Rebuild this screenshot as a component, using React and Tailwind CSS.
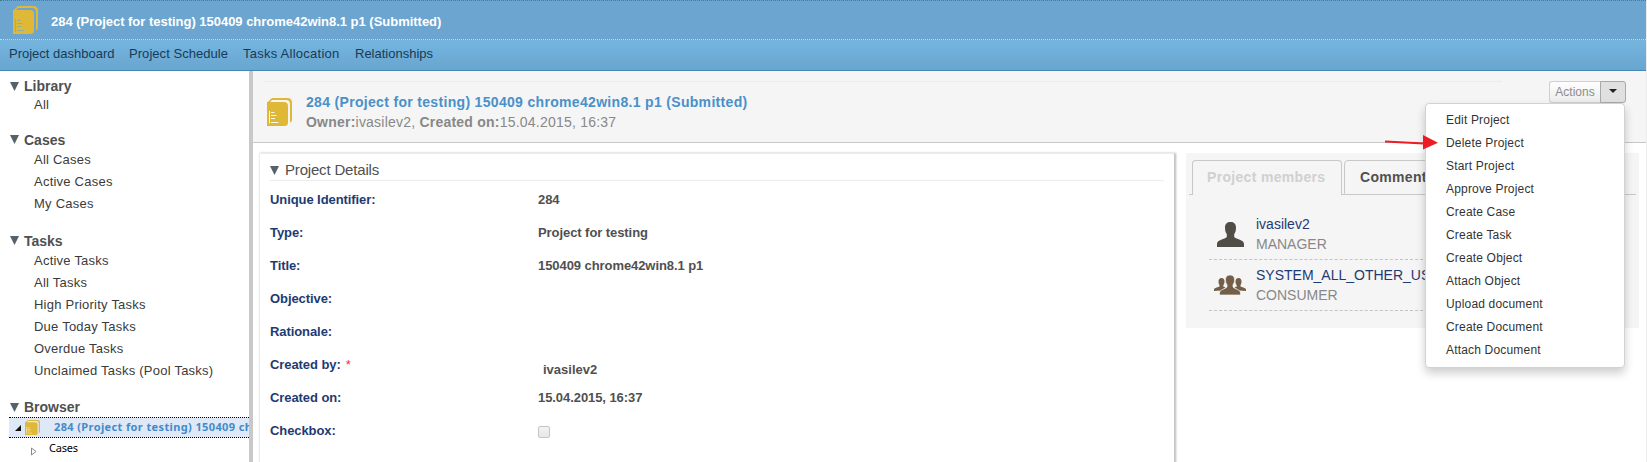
const NAV = [
  ['Project dashboard', 'w-[120px]', ''],
  ['Project Schedule', 'w-[114px]', 'tracking-[0.05px]'],
  ['Tasks Allocation', 'w-[112px] ', 'tracking-[0.25px]'],
  ['Relationships', '', ''],
];

const SECTIONS = [
  { title: 'Library', items: ['All'], box: 'h-[52px]', head: 'h-[16px]' },
  { title: 'Cases', items: ['All Cases', 'Active Cases', 'My Cases'], box: 'h-[101px]', head: 'h-[19px]' },
  { title: 'Tasks', items: ['Active Tasks', 'All Tasks', 'High Priority Tasks', 'Due Today Tasks', 'Overdue Tasks', 'Unclaimed Tasks (Pool Tasks)'], box: 'h-[169px]', head: 'h-[19px]' },
];

const ACTIONS = ['Edit Project', 'Delete Project', 'Start Project', 'Approve Project', 'Create Case', 'Create Task', 'Create Object', 'Attach Object', 'Upload document', 'Create Document', 'Attach Document'];

const FIELDS = [
  ['Unique Identifier:', '284'],
  ['Type:', 'Project for testing'],
  ['Title:', '150409 chrome42win8.1 p1'],
  ['Objective:', ''],
  ['Rationale:', ''],
  ['Created by:', 'ivasilev2'],
  ['Created on:', '15.04.2015, 16:37'],
  ['Checkbox:', null],
];

const PROJECT = '284 (Project for testing) 150409 chrome42win8.1 p1 (Submitted)';

function Book({ className, paper }) {
  return (
    <svg viewBox="0 0 25 28" preserveAspectRatio="none" className={className}>
      <path d="M0 5 L4.2 0.6 Q4.8 0 6 0 H20.5 Q25 0 25 4.5 V22.5 L23 25 V6 Q23 2 19 2 H5 L2.2 5 Z" fill="#e0b837" />
      <path d="M0 4 H17 Q21 4 21 8 V24.5 Q21 28 17.500 28 H0 Z" fill="#e0b837" />
      <path d="M2.500 13v12.500M4 14.500h3.500M4 17.500h5.500M4 20.500h4M4 24.500h7.500" stroke={paper} strokeWidth="1" fill="none" />
    </svg>
  );
}

function Down() {
  return (
    <svg viewBox="0 0 9 9" className="h-[9px] w-[9px] shrink-0">
      <path d="M0 0H9L4.5 9Z" fill="#56616b" />
    </svg>
  );
}

function Person() {
  return (
    <svg viewBox="0 0 27 25" className="h-[25px] w-[27px]">
      <path d="M13.5 0C17 0 19 2 19 5.5C19 9 18.2 11 17.2 12V15C19 17.3 27 17.5 27 22V25H0V22C0 17.5 8 17.3 9.8 15V12C8.800 11 8 9 8 5.500C8 2 10 0 13.500 0Z" fill="#504c46" />
    </svg>
  );
}

function Group() {
  return (
    <svg viewBox="0 0 32 20" className="h-5 w-8" fill="#735e48">
      <path d="M7.500 3C9.500 3 10.500 4.300 10.500 6.500C10.500 8.500 10 9.500 9.300 10.200V11.500L11.500 12.500L7 15.500L0 16V14.500C0.500 12.500 4.500 12.500 5.500 11.300V10C4.800 9 4.500 8 4.500 6.500C4.500 4.300 5.500 3 7.500 3Z" />
      <path d="M24.500 3C22.500 3 21.500 4.300 21.500 6.500C21.500 8.500 22 9.500 22.700 10.200V11.500L20.500 12.500L25 15.500L32 16V14.500C31.500 12.500 27.500 12.500 26.500 11.300V10C27.200 9 27.500 8 27.500 6.500C27.500 4.300 26.500 3 24.500 3Z" />
      <path stroke="#f5f5f5" strokeWidth="0.700" d="M16 0C19 0 20.500 1.700 20.500 4.600C20.500 7.500 19.800 8.800 19 9.700V12C20.500 14 26.500 14.500 26.500 18V20H5.500V18C5.500 14.500 11.500 14 13 12V9.700C12.200 8.800 11.500 7.500 11.500 4.600C11.500 1.700 13 0 16 0Z" />
    </svg>
  );
}

function Sidebar() {
  return (
    <aside className="w-[249px] shrink-0 overflow-hidden bg-white pt-[7px] text-[#3b3b3b]">
      {SECTIONS.map((s) => (
        <section key={s.title} className={s.box}>
          <h2 className={`flex items-center gap-[5px] pl-[10px] text-sm font-bold text-[#505050] ${s.head}`}>
            <Down />
            {s.title}
          </h2>
          <ul>
            {s.items.map((i) => (
              <li key={i} className="h-[22px] pl-[34px] text-[13px] leading-[22px] tracking-[0.23px] whitespace-nowrap">{i}</li>
            ))}
          </ul>
        </section>
      ))}
      <h2 className="flex h-[14px] items-center gap-[5px] pl-[10px] text-sm font-bold text-[#505050]">
        <Down />
        Browser
      </h2>
      <div className="mt-[3px] ml-[9px] flex h-[21px] items-center overflow-hidden border-y border-dotted border-black bg-[#dfe8f6] font-['Noto_Sans',sans-serif] text-[11px] whitespace-nowrap">
        <svg viewBox="0 0 6 6" className="ml-[6px] h-[6px] w-[6px] shrink-0"><path d="M6 0V6H0Z" fill="#111" /></svg>
        <Book className="ml-1 h-[15px] w-[15px] shrink-0" paper="#f7efd5" />
        <span className="ml-[14px] font-bold tracking-[0.38px] text-[#428bca]">284 (Project for testing) 150409 chrome42win8.1 p1</span>
      </div>
      <div className="flex h-[22px] items-center pl-[31px] font-['Noto_Sans',sans-serif] text-[11px] tracking-[-0.2px] text-black">
        <svg viewBox="0 0 6 9" className="mt-[4px] mr-[12px] h-[9px] w-[6px]"><path d="M0.500 1V8L5 4.500Z" fill="#fff" stroke="#8a8a8a" /></svg>
        <span className="-mt-px">Cases</span>
      </div>
    </aside>
  );
}

function Details() {
  return (
    <section className="h-[340px] w-[916px] shrink-0 border border-[#ececec] border-r-[#c6c6c6] bg-white px-[10px] shadow-[1px_0_2px_#bbb]">
      <h2 className="flex h-[27px] items-center gap-[6px] border-b border-[#ececec] pt-[6px] text-[15px] tracking-[-0.18px] text-[#505050]">
        <Down />
        Project Details
      </h2>
      <dl className="pt-[2px] text-[13px] font-bold">
        {FIELDS.map(([k, v]) => (
          <div key={k} className="flex h-[33px] items-center">
            <dt className="w-[268px] tracking-[-0.08px] text-[#1f3a72]">
              {k}
              {k === 'Created by:' && <span className="ml-[5px] font-normal text-red-500">*</span>}
            </dt>
            <dd className={k === 'Created by:' ? 'pt-[10px] pl-[5px] text-[#505050]' : 'tracking-[-0.07px] text-[#505050]'}>
              {v === null ? <span className="mt-[3px] block h-3 w-3 rounded-[2px] border border-[#c6c6c6] bg-linear-to-b from-[#f3f3f3] to-[#e6e6e6]" /> : v}
            </dd>
          </div>
        ))}
      </dl>
    </section>
  );
}

function Members() {
  const people = [
    ['ivasilev2', 'MANAGER', <Person key="p" />],
    ['SYSTEM_ALL_OTHER_USERS', 'CONSUMER', <Group key="g" />],
  ];
  return (
    <section className="h-[175px] w-[453px] shrink-0 bg-[#f5f5f5] pt-[7px]">
      <div className="ml-[3px] flex h-[35px] w-[447px] text-sm leading-[32px] font-bold tracking-[0.32px]">
        <span className="w-[3px] border-b border-[#c8c8c8]" />
        <span className="w-[150px] rounded-t-[4px] border border-b-0 border-[#c8c8c8] pl-[14px] text-[#d0d0d0]">Project members</span>
        <span className="w-[2px] border-b border-[#c8c8c8]" />
        <span className="w-[118px] rounded-tl-[4px] border border-[#c8c8c8] pl-[15px] text-[#505050]">Comments</span>
        <span className="flex-1 border-b border-[#c8c8c8]" />
      </div>
      <ul className="pt-[14px] pl-[23px]">
        {people.map(([name, role, icon]) => (
          <li key={name} className="flex h-[51px] w-[400px] items-center border-b border-dashed border-[#c4c4c4]">
            <span className="flex w-[47px] justify-center pr-[5px]">{icon}</span>
            <span className="text-sm leading-5 text-[#888]">
              <span className="block text-[#1f3a72]">{name}</span>
              {role}
            </span>
          </li>
        ))}
      </ul>
    </section>
  );
}

function ActionsMenu() {
  return (
    <div className="relative mt-[10px] flex h-[22px] w-[77px] text-xs">
      <button className="w-[51px] rounded-l-[3px] border border-r-0 border-[#cfcfcf] bg-linear-to-b from-white to-[#ececec] text-[#8c8c8c]">Actions</button>
      <button className="flex w-[26px] items-center justify-center rounded-r-[3px] border border-[#a9a9a9] bg-[#e0e0e0]">
        <svg viewBox="0 0 8 4" className="mb-[2px] h-1 w-2"><path d="M0 0H8L4 4Z" fill="#222" /></svg>
      </button>
      <ul className="absolute top-[22px] right-[1px] z-10 h-[265px] w-[200px] rounded-[4px] border border-[#d2d2d2] bg-white pt-[5px] pl-[20px] shadow-[0_5px_10px_rgba(0,0,0,0.2)]">
        {ACTIONS.map((a) => (
          <li key={a} className="h-[23px] leading-[23px] tracking-[0.18px] text-[#333]">{a}</li>
        ))}
      </ul>
      <svg viewBox="0 0 54 16" className="absolute top-[53px] left-[-164px] z-20 h-4 w-[54px]">
        <path d="M0 7.500L39 9.500" stroke="#ed1c24" strokeWidth="2" />
        <path d="M38 1L53 8.800L38 15.500Z" fill="#ed1c24" />
      </svg>
    </div>
  );
}

export default function App() {
  return (
    <div className="h-[462px] overflow-hidden border-r border-[#ececec] bg-white font-['Liberation_Sans',Arial,sans-serif]">
      <header className="flex h-[39px] items-center border-t border-dotted border-[#3d7f7f] bg-[#6ca5d0] pl-[13px]">
        <Book className="h-7 w-[25px]" paper="#8fb0a0" />
        <h1 className="mt-[4px] ml-[13px] text-[13px] font-bold tracking-[-0.02px] text-white">{PROJECT}</h1>
      </header>
      <nav className="flex h-8 border-t border-b border-t-[#bcdcf0] border-b-[#4688b5] bg-linear-to-b from-[#74b5de] to-[#69a6d0] pl-[9px] text-[13px] leading-[27px] text-[#173b56] [border-top-style:dotted]">
        {NAV.map(([t, w, tr]) => (
          <a key={t} className={`${w} ${tr}`}>{t}</a>
        ))}
      </nav>
      <div className="flex h-[391px]">
        <Sidebar />
        <div className="w-1 shrink-0 bg-[#c8c8c8]" />
        <main className="min-w-0 flex-1">
          <div className="flex h-[72px] border-b border-[#c8c8c8] bg-[#f5f5f5] pl-[10px]">
            <div className="flex w-[1239px] flex-col pt-[10px]">
              <div className="h-px bg-[#ececec]" />
              <div className="flex pl-[4px]">
                <Book className="mt-[16px] h-7 w-[25px]" paper="#fbf6e6" />
                <div className="ml-[14px] pt-[10px] text-sm leading-5">
                  <div className="font-bold tracking-[0.32px] text-[#4a90c9]">{PROJECT}</div>
                  <div className="tracking-[0.22px] text-[#888]"><b>Owner:</b>ivasilev2, <b>Created on:</b>15.04.2015, 16:37</div>
                </div>
              </div>
            </div>
            <div className="w-[47px]" />
            <ActionsMenu />
          </div>
          <div className="flex gap-[11px] pt-[10px] pl-[6px]">
            <Details />
            <Members />
          </div>
        </main>
      </div>
    </div>
  );
}
